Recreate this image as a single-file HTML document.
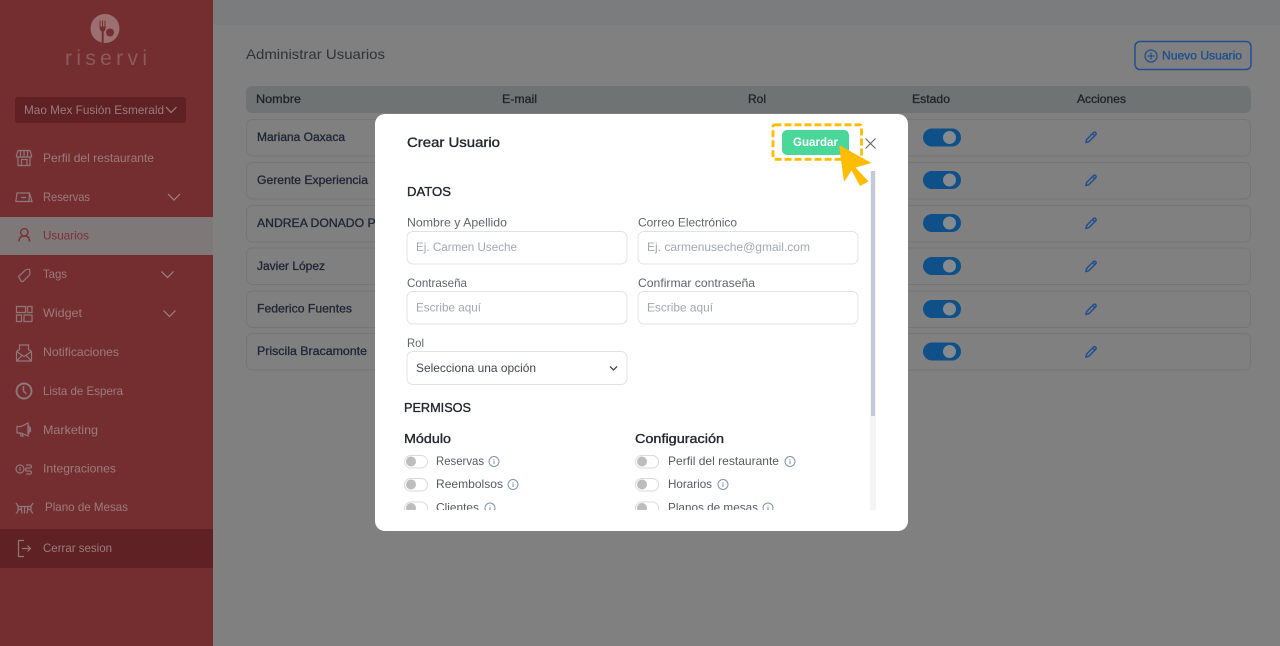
<!DOCTYPE html>
<html lang="es"><head><meta charset="utf-8"><title>Riservi</title>
<style>
html,body{margin:0;padding:0;width:1280px;height:646px;overflow:hidden;background:#808080}
svg{display:block;font-family:"Liberation Sans",sans-serif}
text{font-size:12px;white-space:pre}
.s{fill:#9a7c7e;font-size:12px}
.ic{fill:none;stroke:#8f7779;stroke-width:1.2}
.c{fill:none;stroke:#9d8284;stroke-width:1.2}
.h{fill:#1f2326;stroke:#1f2326;stroke-width:.3;font-size:12px}
.n{fill:#202536;stroke:#202536;stroke-width:.3;font-size:12px}
.l{fill:#62656d;font-size:12px}
.p{fill:#a3a8b0;font-size:12px}
.t{fill:#565a63;font-size:12px}
.b{fill:#23262e;stroke:#23262e;stroke-width:.35;font-size:13px}
.i{fill:none;stroke:#7f93ad;stroke-width:1}
.f{fill:none;stroke:#dfe3e9;stroke-width:1;}
</style></head><body>
<svg width="1280" height="646" viewBox="0 0 1280 646" xmlns="http://www.w3.org/2000/svg">
<defs><clipPath id="cp"><rect x="375" y="170" width="533" height="340"/></clipPath></defs>
<rect width="1280" height="646" fill="#808080"/>
<rect x="213" width="1067" height="25" fill="#7a7c7d"/>
<!-- sidebar -->
<rect width="213" height="646" fill="#752e30"/>
<rect y="217" width="213" height="38" fill="#7f7879"/>
<rect y="529" width="213" height="39" fill="#5f2123"/>
<!-- logo -->
<circle cx="105" cy="28.500" r="14.500" fill="#9c6f71"/>
<path d="M99.500 26.500q0 4 2.200 5v12h2v-12q2-1 2-5z" fill="#752e30"/>
<path d="M100 20.500v7M102.500 20.500v7M105 20.500v7" stroke="#752e30" stroke-width="1"/>
<circle cx="110" cy="32.500" r="4" fill="#752e30"/>
<text x="65" y="65" fill="#8a5a5c" style="font-size:21px" textLength="82" lengthAdjust="spacing">riservi</text>
<rect x="15" y="97" width="171" height="26" rx="3" fill="#5f2123"/>
<text x="24" y="114" class="s" textLength="140" lengthAdjust="spacingAndGlyphs">Mao Mex Fusión Esmerald</text>
<path class="c" d="M166 107l5 5.500 5.500-5.500M168 194l6 6 6-6M161.500 271.500l6 6 6-6M163.500 310.500l6 6 6-6"/>
<text x="43" y="162" class="s" textLength="111" lengthAdjust="spacingAndGlyphs">Perfil del restaurante</text>
<text x="43" y="201" class="s" textLength="47" lengthAdjust="spacingAndGlyphs">Reservas</text>
<text x="43" y="239.500" fill="#7c2f36" style="font-size:12px" textLength="46" lengthAdjust="spacingAndGlyphs">Usuarios</text>
<text x="43" y="278" class="s" textLength="24" lengthAdjust="spacingAndGlyphs">Tags</text>
<text x="43" y="317" class="s" textLength="39" lengthAdjust="spacingAndGlyphs">Widget</text>
<text x="43" y="356" class="s" textLength="76" lengthAdjust="spacingAndGlyphs">Notificaciones</text>
<text x="43" y="395" class="s" textLength="80" lengthAdjust="spacingAndGlyphs">Lista de Espera</text>
<text x="43" y="434" class="s" textLength="55" lengthAdjust="spacingAndGlyphs">Marketing</text>
<text x="43" y="472.500" class="s" textLength="73" lengthAdjust="spacingAndGlyphs">Integraciones</text>
<text x="45" y="511" class="s" textLength="83" lengthAdjust="spacingAndGlyphs">Plano de Mesas</text>
<text x="43" y="552" class="s" textLength="69" lengthAdjust="spacingAndGlyphs">Cerrar sesion</text>
<!-- sidebar icons -->
<path class="ic" d="M18 150.500h12l1.500 5v1.500h-15v-1.500zM20.500 150.500v6.500M24 150.500v6.500M27.500 150.500v6.500M18 157v8.500h12V157M21.500 165.500v-6h5.500v6"/>
<path class="ic" d="M15.800 201.500l1.200-8.500h12.500l-.5 8.500zM29.500 193l2.500 8.500-3 0M21 197.500h5M23.500 195.500v.1M23.500 199.500v.1"/>
<path fill="none" stroke="#7c2f36" stroke-width="1.400" d="M19 241.500q0-5.500 5.300-5.500t5.300 5.500M24.300 236a3.700 3.700 0 1 0 0-7.400a3.700 3.700 0 0 0 0 7.400z"/>
<path class="ic" d="M18.500 276.500l7-6.500q1-.7 2.500-.7h1.500l.5 4q0 1-.8 2l-6 6q-1 .7-2 0zM26.800 272.500v.1"/>
<path class="ic" d="M16.500 306.500h9v6h-9zM27.500 306.500h4.500v6h-4.500zM16.500 315h5v6.500h-5zM24 315h8v6.500h-8z"/>
<path class="ic" d="M16.500 351.500l3-2v-4.500h9v4.500l3 2v9.500h-15zM16.500 351.500l7.500 5 7.500-5M16.500 361l5.500-5.500M31.500 361l-5.500-5.500"/>
<circle cx="24" cy="391" r="7.500" fill="none" stroke="#8f7779" stroke-width="1.900"/>
<path d="M23.500 386v5l3 3" fill="none" stroke="#8f7779" stroke-width="1.500"/>
<path class="ic" d="M17 426.500h4l7-3.500v13l-7-3h-4zM20 433l1 3h2l-1-3M28 424q3 5.500 0 11M30 427q1 2.500 0 5"/>
<circle cx="20" cy="469" r="4" class="ic"/>
<path class="ic" d="M20 467v4M26 465h4a1.500 1.500 0 0 1 0 3h-3a1.500 1.500 0 0 0 0 3h3a1.500 1.500 0 0 1 0 3h-4"/>
<path class="ic" d="M16 503l2 3v5l-2 2.500M33 503l-2 3v5l2 2.500M18 506.500h13M18 509.500h4M27 509.500h4M24.500 506.500v7M21 506.500l1 7M28 506.500l-1 7"/>
<path class="ic" d="M24 540.500h-5.500v16H24M22 548.500h8.500M27.500 545.500l3 3-3 3"/>
<!-- main -->
<text x="246" y="59" fill="#303336" style="font-size:14px" textLength="139" lengthAdjust="spacingAndGlyphs">Administrar Usuarios</text>
<rect x="1135" y="41.500" width="116" height="28" rx="5" fill="none" stroke="#22508f" stroke-width="1.500"/>
<circle cx="1151" cy="56" r="6" fill="none" stroke="#22508f" stroke-width="1.300"/>
<path d="M1147.500 56h7M1151 52.500v7" stroke="#22508f" stroke-width="1.300"/>
<text x="1162" y="59.500" fill="#22508f" stroke="#22508f" stroke-width=".35" style="font-size:11.500px" textLength="80" lengthAdjust="spacingAndGlyphs">Nuevo Usuario</text>
<rect x="246" y="86" width="1005" height="27" rx="6" fill="#6f7374"/>
<text x="256" y="103" class="h" textLength="45" lengthAdjust="spacingAndGlyphs">Nombre</text>
<text x="502" y="103" class="h" textLength="35" lengthAdjust="spacingAndGlyphs">E-mail</text>
<text x="748" y="103" class="h" textLength="18" lengthAdjust="spacingAndGlyphs">Rol</text>
<text x="912" y="103" class="h" textLength="38" lengthAdjust="spacingAndGlyphs">Estado</text>
<text x="1077" y="103" class="h" textLength="49" lengthAdjust="spacingAndGlyphs">Acciones</text>
<g fill="none" stroke="#767676">
<rect x="246.500" y="119.500" width="1004" height="36.500" rx="6"/>
<rect x="246.500" y="162.500" width="1004" height="36.500" rx="6"/>
<rect x="246.500" y="205.500" width="1004" height="36.500" rx="6"/>
<rect x="246.500" y="248" width="1004" height="36.500" rx="6"/>
<rect x="246.500" y="291" width="1004" height="36.500" rx="6"/>
<rect x="246.500" y="333.500" width="1004" height="36.500" rx="6"/>
</g>
<text x="257" y="141" class="n" textLength="88" lengthAdjust="spacingAndGlyphs">Mariana Oaxaca</text>
<text x="257" y="184" class="n" textLength="111" lengthAdjust="spacingAndGlyphs">Gerente Experiencia</text>
<text x="257" y="227" class="n" textLength="122" lengthAdjust="spacingAndGlyphs">ANDREA DONADO PI</text>
<text x="257" y="270" class="n" textLength="68" lengthAdjust="spacingAndGlyphs">Javier López</text>
<text x="257" y="312.500" class="n" textLength="95" lengthAdjust="spacingAndGlyphs">Federico Fuentes</text>
<text x="257" y="355" class="n" textLength="110" lengthAdjust="spacingAndGlyphs">Priscila Bracamonte</text>
<g id="rows">
<rect x="923" y="128.500" width="38" height="18" rx="9" fill="#0f5088"/><circle cx="949.500" cy="137.500" r="6.500" fill="#858a8f"/>
<rect x="923" y="171" width="38" height="18" rx="9" fill="#0f5088"/><circle cx="949.500" cy="180" r="6.500" fill="#858a8f"/>
<rect x="923" y="214" width="38" height="18" rx="9" fill="#0f5088"/><circle cx="949.500" cy="223" r="6.500" fill="#858a8f"/>
<rect x="923" y="257" width="38" height="18" rx="9" fill="#0f5088"/><circle cx="949.500" cy="266" r="6.500" fill="#858a8f"/>
<rect x="923" y="300" width="38" height="18" rx="9" fill="#0f5088"/><circle cx="949.500" cy="309" r="6.500" fill="#858a8f"/>
<rect x="923" y="342.500" width="38" height="18" rx="9" fill="#0f5088"/><circle cx="949.500" cy="351.500" r="6.500" fill="#858a8f"/>
</g>
<g fill="none" stroke="#22508f" stroke-width="1.500">
<path d="M1086 142.500l.6-3 7-7q1-.7 2 .2t.2 2l-7 7zM1092.500 133.500l2.500 2.500"/>
<path d="M1086 185.500l.6-3 7-7q1-.7 2 .2t.2 2l-7 7zM1092.500 176.500l2.500 2.500"/>
<path d="M1086 228.500l.6-3 7-7q1-.7 2 .2t.2 2l-7 7zM1092.500 219.500l2.500 2.500"/>
<path d="M1086 271.500l.6-3 7-7q1-.7 2 .2t.2 2l-7 7zM1092.500 262.500l2.500 2.500"/>
<path d="M1086 314.500l.6-3 7-7q1-.7 2 .2t.2 2l-7 7zM1092.500 305.500l2.500 2.500"/>
<path d="M1086 357l.6-3 7-7q1-.7 2 .2t.2 2l-7 7zM1092.500 348l2.500 2.500"/>
</g>
<!-- modal -->
<rect x="375" y="114" width="533" height="417" rx="10" fill="#fff"/>
<text x="407" y="147" fill="#24272e" stroke="#24272e" stroke-width=".35" style="font-size:14px" textLength="93" lengthAdjust="spacingAndGlyphs">Crear Usuario</text>
<rect x="782" y="130" width="67" height="25" rx="5" fill="#4ad79a"/>
<text x="793" y="146" fill="#fff" font-weight="700" style="font-size:11.500px" textLength="45" lengthAdjust="spacingAndGlyphs">Guardar</text>
<rect x="773" y="124.800" width="88.500" height="34.500" rx="1.500" fill="none" stroke="#ffbc00" stroke-width="2.800" stroke-dasharray="7 3"/>
<path d="M865.500 138.500l10 10M875.500 138.500l-10 10" stroke="#6a6a6a" stroke-width="1.200"/>
<rect x="870" y="171" width="6" height="339" fill="#f4f4f4"/>
<rect x="871" y="171" width="4" height="245" fill="#c2c9db"/>
<polygon points="839,145 871.500,163 855.500,167.500 868.500,181.500 860,186 851.500,170.500 844,182" fill="#ffbc00"/>
<text x="407" y="196" class="b" textLength="44" lengthAdjust="spacingAndGlyphs">DATOS</text>
<text x="407" y="226.500" class="l" textLength="100" lengthAdjust="spacingAndGlyphs">Nombre y Apellido</text>
<text x="638" y="226.500" class="l" textLength="99" lengthAdjust="spacingAndGlyphs">Correo Electrónico</text>
<rect x="407" y="231.500" width="220" height="32.500" rx="6" class="f"/>
<rect x="638" y="231.500" width="220" height="32.500" rx="6" class="f"/>
<text x="416" y="251" class="p" textLength="101" lengthAdjust="spacingAndGlyphs">Ej. Carmen Useche</text>
<text x="647" y="251" class="p" textLength="163" lengthAdjust="spacingAndGlyphs">Ej. carmenuseche@gmail.com</text>
<text x="407" y="287" class="l" textLength="60" lengthAdjust="spacingAndGlyphs">Contraseña</text>
<text x="638" y="287" class="l" textLength="117" lengthAdjust="spacingAndGlyphs">Confirmar contraseña</text>
<rect x="407" y="291.500" width="220" height="32.500" rx="6" class="f"/>
<rect x="638" y="291.500" width="220" height="32.500" rx="6" class="f"/>
<text x="416" y="311.500" class="p" textLength="65" lengthAdjust="spacingAndGlyphs">Escribe aquí</text>
<text x="647" y="311.500" class="p" textLength="66" lengthAdjust="spacingAndGlyphs">Escribe aquí</text>
<text x="407" y="347" class="l" textLength="17" lengthAdjust="spacingAndGlyphs">Rol</text>
<rect x="407" y="351.500" width="220" height="33" rx="6" class="f"/>
<text x="416" y="372" fill="#43464d" style="font-size:12px" textLength="120" lengthAdjust="spacingAndGlyphs">Selecciona una opción</text>
<path d="M610 366.500l3.500 3.500 3.500-3.500" fill="none" stroke="#43464d" stroke-width="1.300"/>
<text x="404" y="412" class="b" textLength="67" lengthAdjust="spacingAndGlyphs">PERMISOS</text>
<text x="404" y="443" class="b" textLength="47" lengthAdjust="spacingAndGlyphs">Módulo</text>
<text x="635" y="443" class="b" textLength="89" lengthAdjust="spacingAndGlyphs">Configuración</text>
<g clip-path="url(#cp)">
<g fill="#fff" stroke="#dadada"><rect x="404.500" y="455.500" width="23" height="12.500" rx="6.250"/><rect x="404.500" y="478.500" width="23" height="12.500" rx="6.250"/><rect x="404.500" y="502" width="23" height="12.500" rx="6.250"/><rect x="635.500" y="455.500" width="23" height="12.500" rx="6.250"/><rect x="635.500" y="478.500" width="23" height="12.500" rx="6.250"/><rect x="635.500" y="502" width="23" height="12.500" rx="6.250"/></g>
<g fill="#bdbdbd"><circle cx="411" cy="461.500" r="5"/><circle cx="411" cy="484.500" r="5"/><circle cx="411" cy="508" r="5"/><circle cx="642" cy="461.500" r="5"/><circle cx="642" cy="484.500" r="5"/><circle cx="642" cy="508" r="5"/></g>
<text x="436" y="465" class="t" textLength="48" lengthAdjust="spacingAndGlyphs">Reservas</text>
<text x="436" y="488" class="t" textLength="67" lengthAdjust="spacingAndGlyphs">Reembolsos</text>
<text x="436" y="511.500" class="t" textLength="43" lengthAdjust="spacingAndGlyphs">Clientes</text>
<text x="668" y="465" class="t" textLength="111" lengthAdjust="spacingAndGlyphs">Perfil del restaurante</text>
<text x="668" y="488" class="t" textLength="44" lengthAdjust="spacingAndGlyphs">Horarios</text>
<text x="668" y="511.500" class="t" textLength="90" lengthAdjust="spacingAndGlyphs">Planos de mesas</text>
<g class="i"><circle cx="494" cy="461.500" r="5"/><circle cx="513" cy="484.500" r="5"/><circle cx="490" cy="508" r="5"/><circle cx="790" cy="461.500" r="5"/><circle cx="723" cy="484.500" r="5"/><circle cx="768" cy="508" r="5"/>
<path d="M494 460.500v3.500M494 459v.8M513 483.500v3.500M513 482v.8M490 507v3.500M490 505.500v.8M790 460.500v3.500M790 459v.8M723 483.500v3.500M723 482v.8M768 507v3.500M768 505.500v.8"/></g>
</g>
</svg>
</body></html>
